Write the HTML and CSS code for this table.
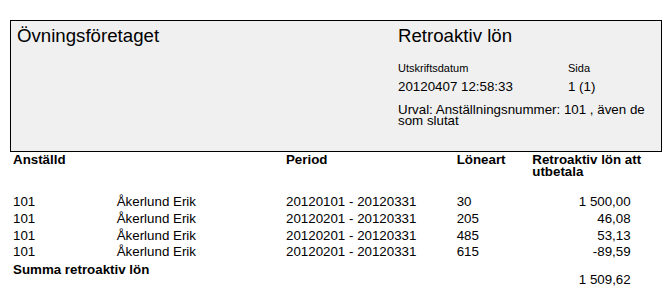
FILE: index.html
```html
<!DOCTYPE html>
<html lang="sv">
<head>
<meta charset="utf-8">
<link rel="stylesheet" href="styles.css">
</head>
<body>
<div class="report">
  <header class="head-box">
    <div class="company">Övningsföretaget</div>
    <div class="meta">
      <div class="title">Retroaktiv lön</div>
      <div class="meta-grid">
        <div class="label">Utskriftsdatum</div>
        <div class="label">Sida</div>
        <div class="value">20120407 12:58:33</div>
        <div class="value">1 (1)</div>
      </div>
      <div class="selection">Urval: Anställningsnummer: 101 , även de<br>som slutat</div>
    </div>
  </header>

  <div class="table">
    <div class="row th">
      <div>Anställd</div>
      <div></div>
      <div>Period</div>
      <div>Löneart</div>
      <div class="wrap">Retroaktiv lön att<br>utbetala</div>
    </div>
    <div class="rows">
      <div class="row td"><div>101</div><div>Åkerlund Erik</div><div>20120101 - 20120331</div><div>30</div><div class="num">1 500,00</div></div>
      <div class="row td"><div>101</div><div>Åkerlund Erik</div><div>20120201 - 20120331</div><div>205</div><div class="num">46,08</div></div>
      <div class="row td"><div>101</div><div>Åkerlund Erik</div><div>20120201 - 20120331</div><div>485</div><div class="num">53,13</div></div>
      <div class="row td"><div>101</div><div>Åkerlund Erik</div><div>20120201 - 20120331</div><div>615</div><div class="num">-89,59</div></div>
    </div>
    <div class="row sum">
      <div class="sum-label">Summa retroaktiv lön</div>
      <div class="num sum-value">1 509,62</div>
    </div>
  </div>
</div>
</body>
</html>
```

FILE: styles.css
```css
html, body {
  margin: 0;
  padding: 0;
  background: #ffffff;
}

body {
  font-family: "Liberation Sans", Arial, sans-serif;
  color: #000;
  width: 669px;
  height: 305px;
  overflow: hidden;
}

.report {
  padding-top: 20px;
}

.head-box {
  box-sizing: border-box;
  margin-left: 10px;
  width: 652px;
  height: 132px;
  border: 1px solid #000;
  background: #f0f0f0;
  display: grid;
  grid-template-columns: 381px 1fr;
  padding: 4px 0 0 6px;
}

.company,
.title {
  font-size: 18.67px;
  line-height: 21px;
}

.meta-grid {
  display: grid;
  grid-template-columns: 170px 1fr;
  margin-top: 16px;
}

.label {
  font-size: 11px;
  line-height: 13px;
}

.value {
  font-size: 13.33px;
  line-height: 15px;
  margin-top: 4px;
}

.selection {
  font-size: 13.33px;
  line-height: 11.4px;
  margin-top: 10px;
}

.table {
  padding-left: 13px;
  font-size: 13.33px;
}

.row {
  display: grid;
  grid-template-columns: 103.7px 169.3px 170.7px 75.6px 98.4px;
}

.th {
  font-weight: bold;
  line-height: 11.6px;
  margin-top: 2.3px;
}

.wrap {
  white-space: nowrap;
}

.rows {
  margin-top: 16.8px;
}

.td {
  line-height: 16.67px;
}

.num {
  text-align: right;
}

.sum {
  grid-template-columns: 519.3px 98.4px;
  margin-top: 1px;
}

.sum-label {
  font-weight: bold;
  line-height: 16.67px;
}

.sum-value {
  line-height: 16.67px;
  margin-top: 10px;
}
```
